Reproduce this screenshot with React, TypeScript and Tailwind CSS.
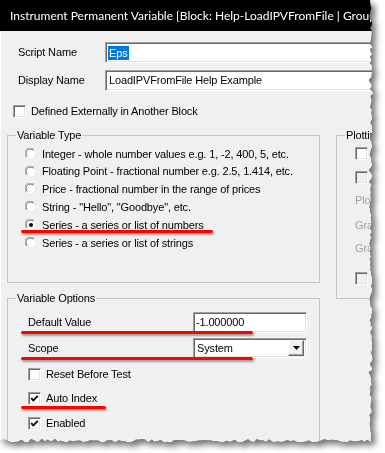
import React from "react";

const EDGE_X = 371;
const EDGE_Y = 441;

// jagged "torn paper" outline for the right and bottom edges
function tornPath() {
  let s = 11;
  const r = () => {
    s = (s * 9301 + 49297) % 233280;
    return s / 233280;
  };
  const pts: string[] = ["-20,-20"];
  for (let y = -20; y < EDGE_Y; y += 2 + Math.round(r() * 2)) {
    const big = r() > 0.9 ? (r() - 0.5) * 5 : 0;
    pts.push(`${(EDGE_X + (r() - 0.5) * 3 + big).toFixed(1)},${y}`);
  }
  for (let x = EDGE_X; x > -20; x -= 2 + Math.round(r() * 2)) {
    const big = r() > 0.9 ? (r() - 0.5) * 4 : 0;
    pts.push(`${x},${(EDGE_Y + (r() - 0.5) * 3 + big).toFixed(1)}`);
  }
  pts.push(`-20,${EDGE_Y}`);
  return "M" + pts.join(" L") + " Z";
}

const SUNKEN =
  "border border-t-[#a0a0a0] border-l-[#a0a0a0] border-b-white border-r-white shadow-[inset_1px_1px_0_#696969,inset_-1px_-1px_0_#e3e3e3]";

function Checkbox({ checked = false, disabled = false }: { checked?: boolean; disabled?: boolean }) {
  return (
    <span
      className={`relative inline-block h-[13px] w-[13px] shrink-0 ${SUNKEN} ${
        disabled ? "bg-[#f0f0f0]" : "bg-white"
      }`}
    >
      {checked && (
        <svg className="absolute left-0 top-0" width="11" height="11" viewBox="0 0 11 11">
          <path d="M2.2 5.2 L4.3 7.4 L8.8 2.8" fill="none" stroke="#000" strokeWidth="1.8" />
        </svg>
      )}
    </span>
  );
}

function Radio({ checked = false }: { checked?: boolean }) {
  return (
    <svg width="12" height="12" viewBox="0 0 12 12" className="shrink-0">
      <circle cx="6" cy="6" r="5.5" fill="#fff" />
      <path d="M1.4 9.2 A5 5 0 0 1 9.2 1.4" fill="none" stroke="#a0a0a0" strokeWidth="1" />
      <path d="M2.3 8.4 A4 4 0 0 1 8.4 2.3" fill="none" stroke="#696969" strokeWidth="1" />
      <path d="M9.7 2.4 A5 5 0 0 1 2.4 9.7" fill="none" stroke="#e3e3e3" strokeWidth="1" />
      {checked && <circle cx="6" cy="6" r="2" fill="#000" />}
    </svg>
  );
}

function Group({ label, className, children }: { label: string; className: string; children: React.ReactNode }) {
  return (
    <div className={`relative shrink-0 border border-[#c4c4c4] ${className}`}>
      <span className="absolute -top-[8px] left-[8px] whitespace-nowrap bg-[#f0f0f0] px-[1px] leading-[14px]">
        {label}
      </span>
      {children}
    </div>
  );
}

function Underline({ className }: { className: string }) {
  return (
    <div
      className={`absolute h-[3px] rounded-full bg-[#ff0000] shadow-[1px_2px_2px_rgba(0,0,0,0.35)] ${className}`}
    />
  );
}

const TYPES = [
  "Integer - whole number values e.g. 1, -2, 400, 5, etc.",
  "Floating Point - fractional number e.g. 2.5, 1.414, etc.",
  "Price - fractional number in the range of prices",
  'String - "Hello", "Goodbye", etc.',
  "Series - a series or list of numbers",
  "Series - a series or list of strings",
];

export default function App() {
  return (
    <div className="relative h-[453px] w-[385px] overflow-hidden bg-white">
      <svg width="0" height="0" className="absolute">
        <defs>
          <clipPath id="torn" clipPathUnits="userSpaceOnUse">
            <path d={tornPath()} />
          </clipPath>
        </defs>
      </svg>

      <div className="[filter:drop-shadow(0_0_0.6px_rgba(0,0,0,0.9))_drop-shadow(4px_4px_3px_rgba(0,0,0,0.55))]">
        <div className="h-[453px] w-[385px] overflow-hidden bg-[#f0f0f0] [clip-path:url(#torn)] font-['Liberation_Sans',Arial,sans-serif] text-[11px] tracking-[-0.15px] text-black">
          {/* Title bar */}
          <div className="flex h-[31px] items-center whitespace-nowrap bg-black pl-[10px] font-['Lato',sans-serif] text-[12px] tracking-normal text-white">
            Instrument Permanent Variable [Block: Help-LoadIPVFromFile | Group
          </div>

          <div className="relative border-l border-white pt-[11px]">
            {/* Names */}
            <div className="flex h-[21px] items-center">
              <span className="w-[104px] shrink-0 pl-[17px]">Script Name</span>
              <div className={`flex h-[21px] w-[300px] shrink-0 items-center bg-white pl-[2px] ${SUNKEN}`}>
                <span className="bg-[#0078d7] px-[1px] leading-[14px] text-white">Eps</span>
              </div>
            </div>
            <div className="mt-[7px] flex h-[21px] items-center">
              <span className="w-[104px] shrink-0 pl-[17px]">Display Name</span>
              <div className={`flex h-[21px] w-[300px] shrink-0 items-center bg-white pl-[3px] ${SUNKEN}`}>
                LoadIPVFromFile Help Example
              </div>
            </div>
            <div className="mt-[14px] flex h-[13px] items-center gap-[5px] pl-[12px]">
              <Checkbox />
              <span>Defined Externally in Another Block</span>
            </div>

            {/* Groups */}
            <div className="mt-[17px] flex gap-[16px] pl-[6px]">
              <div className="flex w-[313px] shrink-0 flex-col gap-[15px]">
                <Group label="Variable Type" className="h-[148px] pt-[9px] pl-[17px]">
                  {TYPES.map((t, i) => (
                    <div key={t} className="flex h-[17.8px] items-center gap-[5px] whitespace-nowrap">
                      <Radio checked={i === 4} />
                      <span>{t}</span>
                    </div>
                  ))}
                </Group>

                <Group label="Variable Options" className="h-[180px] pt-[13px] pl-[20px]">
                  <div className="flex h-[21px] items-center">
                    <span className="w-[165px] shrink-0">Default Value</span>
                    <div className={`flex h-[21px] w-[114px] shrink-0 items-center bg-white pl-[2px] ${SUNKEN}`}>
                      -1.000000
                    </div>
                  </div>
                  <div className="mt-[5px] flex h-[20px] items-center">
                    <span className="w-[165px] shrink-0">Scope</span>
                    <div
                      className={`flex h-[20px] w-[114px] shrink-0 items-center justify-between bg-white pl-[3px] pr-[2px] ${SUNKEN}`}
                    >
                      <span>System</span>
                      <span className="flex h-[16px] w-[16px] items-center justify-center border border-t-white border-l-white border-b-[#696969] border-r-[#696969] bg-[#f0f0f0] shadow-[inset_-1px_-1px_0_#a0a0a0]">
                        <svg width="7" height="4" viewBox="0 0 7 4">
                          <path d="M0 0 H7 L3.5 4 Z" fill="#000" />
                        </svg>
                      </span>
                    </div>
                  </div>
                  <div className="mt-[10px] flex h-[13px] items-center gap-[5px]">
                    <Checkbox />
                    <span>Reset Before Test</span>
                  </div>
                  <div className="mt-[11px] flex h-[13px] items-center gap-[5px]">
                    <Checkbox checked />
                    <span>Auto Index</span>
                  </div>
                  <div className="mt-[12px] flex h-[13px] items-center gap-[5px]">
                    <Checkbox checked />
                    <span>Enabled</span>
                  </div>
                </Group>
              </div>

              <Group label="Plotting" className="h-[164px] w-[200px] whitespace-nowrap pl-[18px] pt-[11px]">
                <div className="flex h-[13px] items-center">
                  <Checkbox />
                </div>
                <div className="mt-[11px] flex h-[13px] items-center">
                  <Checkbox disabled />
                </div>
                <div className="mt-[9px] leading-[14px] text-[#a0a0a0]">Plot Type</div>
                <div className="mt-[11px] leading-[14px] text-[#a0a0a0]">Graph Color</div>
                <div className="mt-[9px] leading-[14px] text-[#a0a0a0]">Graph Style</div>
                <div className="mt-[17px] flex h-[13px] items-center">
                  <Checkbox disabled />
                </div>
              </Group>
            </div>

            {/* annotations */}
            <Underline className="left-[20px] top-[199px] w-[192px]" />
            <Underline className="left-[20px] top-[300px] w-[232px]" />
            <Underline className="left-[20px] top-[326px] w-[232px]" />
            <Underline className="left-[20px] top-[375px] w-[85px]" />
          </div>
        </div>
      </div>
    </div>
  );
}
